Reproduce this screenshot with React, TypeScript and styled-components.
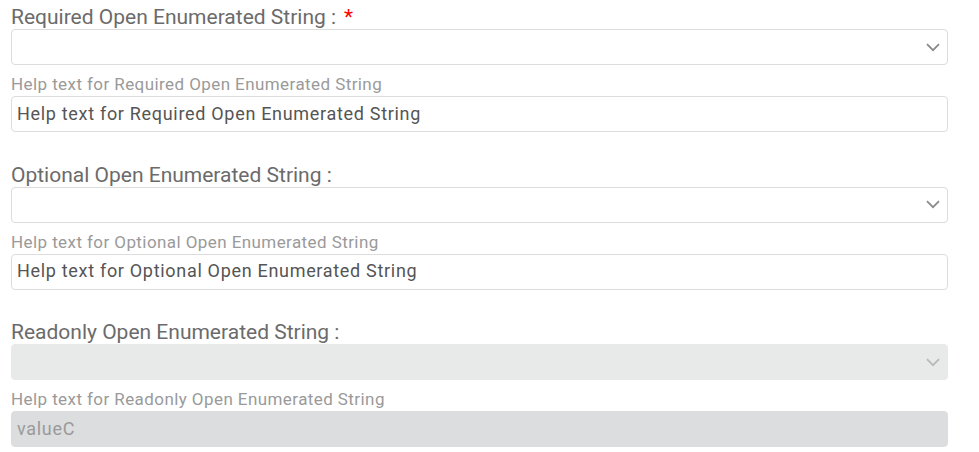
import React from "react";
import styled, { createGlobalStyle } from "styled-components";

const GlobalStyle = createGlobalStyle`
  body {
    margin: 0;
    background: #ffffff;
    font-family: Roboto, "Liberation Sans", sans-serif;
  }
`;

interface FieldProps {
  label: string;
  help: string;
  value: string;
  required?: boolean;
  readOnly?: boolean;
}

const ChevronIcon: React.FC = () => (
  <svg width="14" height="9" viewBox="0 0 14 9" fill="none">
    <path d="M1 1.2 L7 7.2 L13 1.2" stroke="currentColor" strokeWidth="1.8" />
  </svg>
);

const Field: React.FC<FieldProps> = ({ label, help, value, required, readOnly }) => {
  return (
    <StyledField>
      <Label>
        {label} :{required && <Star>*</Star>}
      </Label>
      <SelectBox $readOnly={readOnly}>
        <ChevronIcon />
      </SelectBox>
      <HelpLabel>{help}</HelpLabel>
      <TextInput $readOnly={readOnly} value={value} readOnly onChange={() => {}} />
    </StyledField>
  );
};

const App: React.FC = () => {
  return (
    <>
      <GlobalStyle />
      <Form>
        <Field
          label="Required Open Enumerated String"
          help="Help text for Required Open Enumerated String"
          value="Help text for Required Open Enumerated String"
          required
        />
        <Field
          label="Optional Open Enumerated String"
          help="Help text for Optional Open Enumerated String"
          value="Help text for Optional Open Enumerated String"
        />
        <Field
          label="Readonly Open Enumerated String"
          help="Help text for Readonly Open Enumerated String"
          value="valueC"
          readOnly
        />
      </Form>
    </>
  );
};

const Form = styled.div`
  display: flex;
  flex-direction: column;
  gap: 30.6px;
  width: 937px;
  padding: 5px 0 0 11px;
`;

const StyledField = styled.div`
  display: flex;
  flex-direction: column;
`;

const Label = styled.div`
  height: 24px;
  font-size: 21px;
  line-height: 24px;
  color: #6b6b6b;
`;

const Star = styled.span`
  color: #f00;
  margin-left: 8px;
`;

const SelectBox = styled.div<{ $readOnly?: boolean }>`
  box-sizing: border-box;
  height: 36px;
  display: flex;
  align-items: center;
  justify-content: flex-end;
  padding-right: 7px;
  border: 1px solid ${(p) => (p.$readOnly ? "#e8e9e9" : "#dcdcdc")};
  border-radius: 4px;
  background: ${(p) => (p.$readOnly ? "#e8e9e9" : "#ffffff")};
  color: ${(p) => (p.$readOnly ? "#b9b9b9" : "#8a8a8a")};
`;

const HelpLabel = styled.div`
  height: 24px;
  margin-top: 7px;
  font-size: 17px;
  line-height: 24px;
  letter-spacing: 0.42px;
  color: #9a9a9a;
`;

const TextInput = styled.input<{ $readOnly?: boolean }>`
  box-sizing: border-box;
  height: 36px;
  width: 100%;
  margin: 0;
  padding: 0 5px 2px;
  border: 1px solid ${(p) => (p.$readOnly ? "#dcdddf" : "#dcdcdc")};
  border-radius: 4px;
  background: ${(p) => (p.$readOnly ? "#dcdddf" : "#ffffff")};
  color: ${(p) => (p.$readOnly ? "#9a9a9a" : "#555555")};
  font-family: Roboto, "Liberation Sans", sans-serif;
  font-size: 18px;
  letter-spacing: 0.69px;
  outline: none;
`;

export default App;
